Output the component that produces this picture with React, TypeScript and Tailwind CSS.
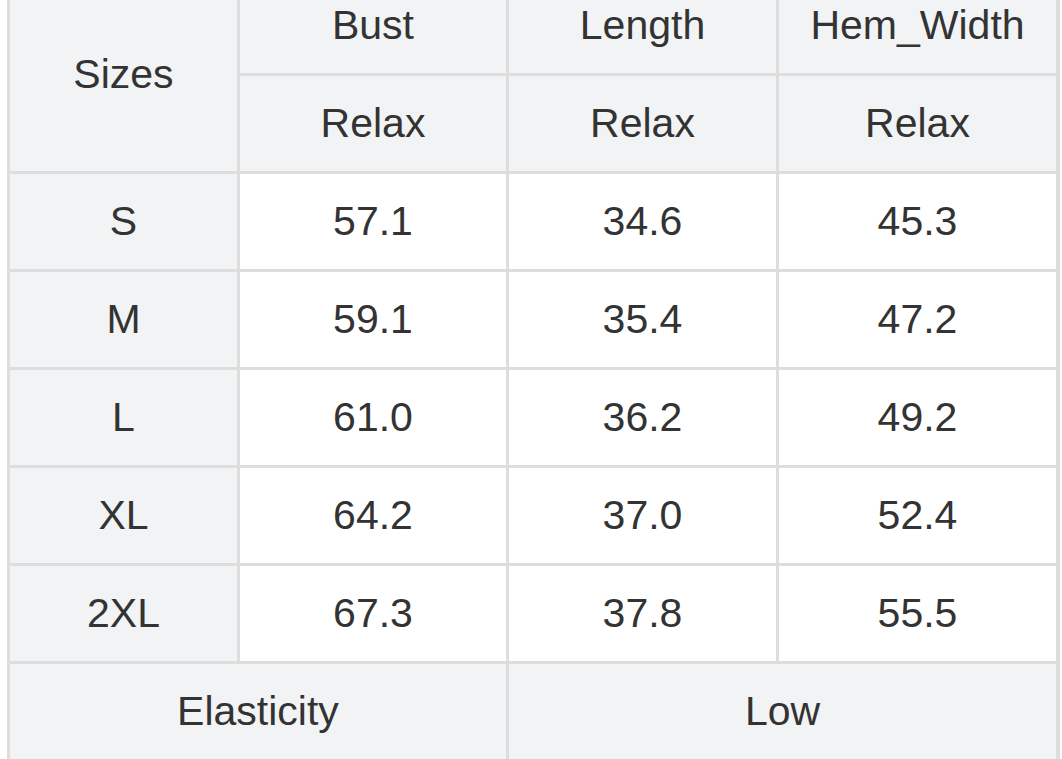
import React from "react";

const rows = [
  ["S", "57.1", "34.6", "45.3"],
  ["M", "59.1", "35.4", "47.2"],
  ["L", "61.0", "36.2", "49.2"],
  ["XL", "64.2", "37.0", "52.4"],
  ["2XL", "67.3", "37.8", "55.5"],
];

const cell = "flex items-center justify-center";

export default function App() {
  return (
    <div
      className="h-[759px] w-[1062px] overflow-hidden bg-white text-[41px] text-[#333333]"
      style={{ fontFamily: '"Liberation Sans", Arial, sans-serif' }}
    >
      <div className="ml-[7px] mt-[-25px] w-[1053px] grid grid-cols-[227px_266px_267px_277px] auto-rows-[95px] gap-[3px] p-[3px] bg-[#dddddd]">
        <div className={`${cell} row-span-2 bg-[#f2f3f5]`}>Sizes</div>
        <div className={`${cell} bg-[#f2f3f5]`}>Bust</div>
        <div className={`${cell} bg-[#f2f3f5]`}>Length</div>
        <div className={`${cell} bg-[#f2f3f5]`}>Hem_Width</div>
        <div className={`${cell} bg-[#f2f3f5]`}>Relax</div>
        <div className={`${cell} bg-[#f2f3f5]`}>Relax</div>
        <div className={`${cell} bg-[#f2f3f5]`}>Relax</div>
        {rows.map((r) => (
          <React.Fragment key={r[0]}>
            <div className={`${cell} bg-[#f2f3f5]`}>{r[0]}</div>
            <div className={`${cell} bg-white`}>{r[1]}</div>
            <div className={`${cell} bg-white`}>{r[2]}</div>
            <div className={`${cell} bg-white`}>{r[3]}</div>
          </React.Fragment>
        ))}
        <div className={`${cell} col-span-2 bg-[#f2f3f5]`}>Elasticity</div>
        <div className={`${cell} col-span-2 bg-[#f2f3f5]`}>Low</div>
      </div>
    </div>
  );
}
